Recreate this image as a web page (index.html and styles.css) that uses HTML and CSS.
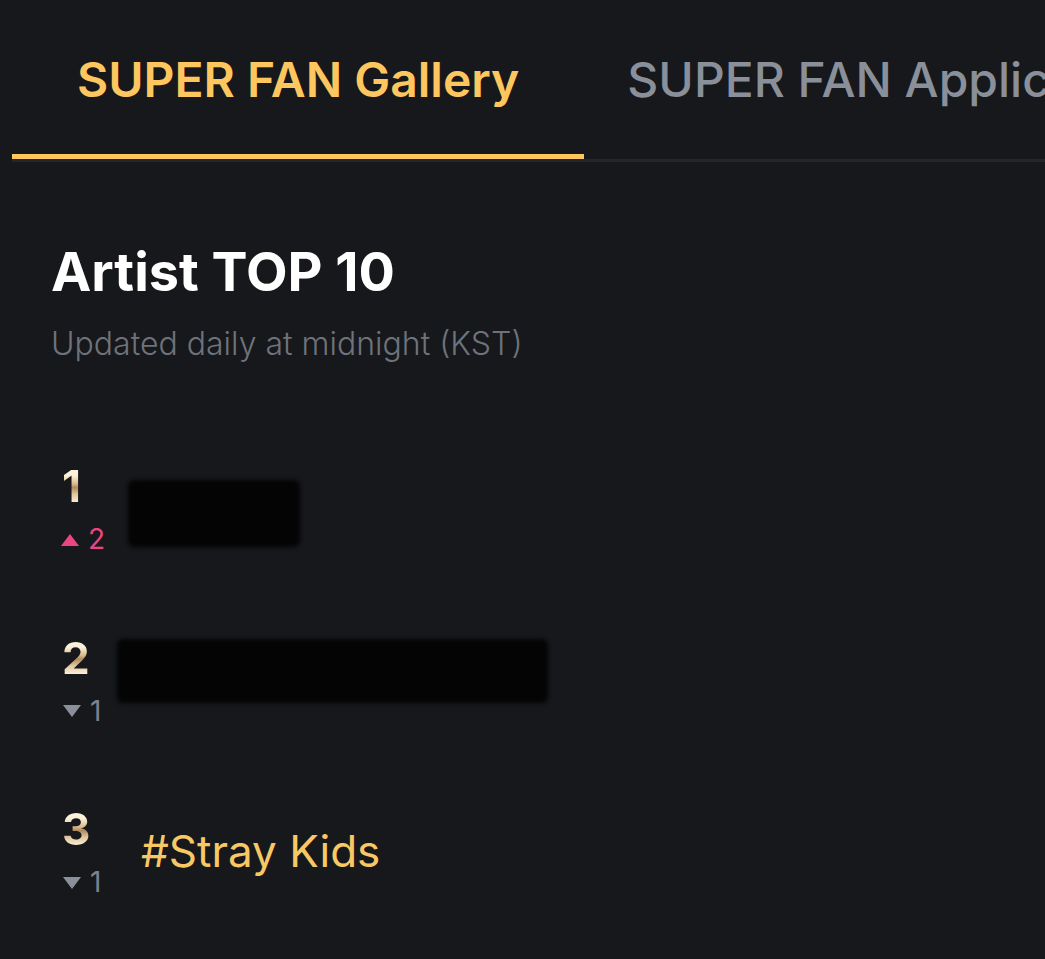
FILE: index.html
```html
<!DOCTYPE html>
<html lang="en">
<head>
<meta charset="utf-8">
<title>SUPER FAN Gallery</title>
<link rel="stylesheet" href="styles.css">
</head>
<body>
<div class="page">
  <nav class="tabs">
    <div class="tab tab-active">SUPER FAN Gallery</div>
    <div class="tab tab-inactive">SUPER FAN Application</div>
  </nav>
  <main class="content">
    <h1 class="title">Artist TOP 10</h1>
    <p class="subtitle">Updated daily at midnight (KST)</p>
    <ol class="ranking">
      <li class="row">
        <div class="rank">
          <span class="rank-num">1</span>
          <span class="change change-up">
            <svg class="tri" width="18" height="12" viewBox="0 0 18 12"><path d="M9 0 L18 12 L0 12 Z" fill="currentColor"/></svg>
            <span>2</span>
          </span>
        </div>
        <div class="redact redact-1"></div>
      </li>
      <li class="row">
        <div class="rank">
          <span class="rank-num">2</span>
          <span class="change change-down">
            <svg class="tri" width="18" height="12" viewBox="0 0 18 12"><path d="M0 0 L18 0 L9 12 Z" fill="currentColor"/></svg>
            <span>1</span>
          </span>
        </div>
        <div class="redact redact-2"></div>
      </li>
      <li class="row">
        <div class="rank">
          <span class="rank-num">3</span>
          <span class="change change-down">
            <svg class="tri" width="18" height="12" viewBox="0 0 18 12"><path d="M0 0 L18 0 L9 12 Z" fill="currentColor"/></svg>
            <span>1</span>
          </span>
        </div>
        <div class="artist">#Stray Kids</div>
      </li>
    </ol>
  </main>
</div>
</body>
</html>
```

FILE: styles.css
```css
* { box-sizing: border-box; }

html, body {
  margin: 0;
  padding: 0;
  background: #17181c;
}

body {
  font-family: Inter, "Noto Sans", "Liberation Sans", sans-serif;
  width: 1045px;
  height: 959px;
  overflow: hidden;
}

.page {
  padding-left: 12px;
}

.tabs {
  display: flex;
  white-space: nowrap;
  overflow: hidden;
  border-bottom: 3px solid #25262a;
}

.tab {
  font-size: 48px;
  line-height: 1.2;
  padding-top: 51px;
  padding-bottom: 50px;
  flex: none;
}

.tab-active {
  color: #fdc65e;
  font-weight: 600;
  padding-left: 65px;
  padding-right: 65px;
  padding-bottom: 45px;
  border-bottom: 5px solid #fdc65e;
}

.tab-inactive {
  color: #899099;
  font-weight: 500;
  padding-left: 43px;
}

.content {
  padding-left: 39px;
}

.title {
  margin: 78px 0 0 0;
  font-size: 54px;
  line-height: 1.2;
  font-weight: 700;
  color: #ffffff;
  letter-spacing: 0;
}

.subtitle {
  margin: 21px 0 0 0;
  font-size: 32px;
  line-height: 1.2;
  font-weight: 300;
  color: #6e737b;
}

.ranking {
  list-style: none;
  margin: 96px 0 0 0;
  padding: 0 0 0 10px;
  display: flex;
  flex-direction: column;
  gap: 75px;
}

.row {
  display: flex;
  align-items: center;
}

.rank {
  width: 80px;
  flex: none;
  display: flex;
  flex-direction: column;
  gap: 10px;
}

.rank-num {
  font-size: 44px;
  line-height: 1.2;
  font-weight: 700;
  background: linear-gradient(180deg, #fff8ea 0%, #fbefd6 30%, #d9bb8c 45%, #b08a5c 52%, #e2c99f 65%, #fbeed6 80%, #fff5e4 100%);
  -webkit-background-clip: text;
  background-clip: text;
  color: transparent;
  align-self: flex-start;
  padding-left: 1px;
}

.change {
  display: flex;
  align-items: center;
  gap: 9px;
  font-size: 28px;
  line-height: 1.2;
  font-weight: 400;
  height: 34px;
}

.change-up { color: #ec4680; }
.change-down { color: #7d838c; }
.change-down .tri { color: #8a9099; margin-left: 2px; }

.tri { flex: none; display: block; }

.redact {
  background: #040404;
  border-radius: 6px;
  filter: blur(2px);
  align-self: flex-start;
}

.redact-1 {
  width: 172px;
  height: 67px;
  margin-left: -13px;
  margin-top: 20px;
}

.redact-2 {
  width: 431px;
  height: 64px;
  margin-left: -24px;
  margin-top: 7px;
}

.artist {
  font-size: 44px;
  line-height: 1.2;
  font-weight: 400;
  color: #f8c865;
}
```
